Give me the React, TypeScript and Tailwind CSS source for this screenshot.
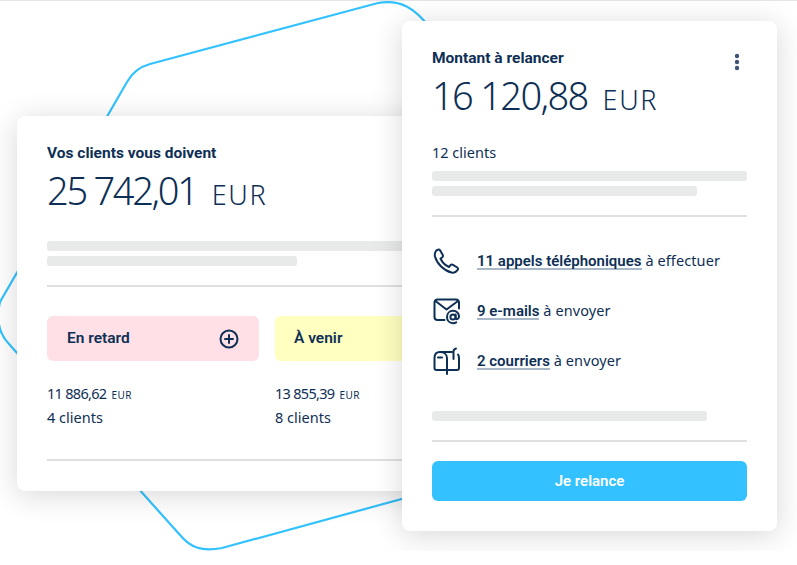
const font = { fontFamily: '"Noto Sans", sans-serif' };
const bold = { fontFamily: 'Roboto, "Noto Sans", sans-serif' };

function Skeleton({ w }: { w: string }) {
  return <div className={`h-[10px] rounded-[3px] bg-[#e8eaea] ${w}`} />;
}

function Phone() {
  return (
    <svg width="28" height="28" viewBox="0 0 28 28" fill="none" stroke="#0e2f55" strokeWidth="2" strokeLinecap="round" strokeLinejoin="round">
      <path d="M4 4C5 2.800 7 2 8 3.200L10.800 8C11.200 9 11 9.800 10 10.500L8.500 11.500C10 15 13.500 18.500 17 20L18.500 18.200C19.200 17.400 20 17.300 21 17.800L25.300 20.500C26.300 21.200 26.300 22.200 25.500 23.200C24 25.300 22 26.200 19.500 25.500C12 23.800 4.800 16.500 3 9.500C2.500 7.500 2.800 5.500 4 4Z" />
    </svg>
  );
}

function Mail() {
  return (
    <svg width="28" height="28" viewBox="0 0 28 28" fill="none" stroke="#0e2f55" strokeWidth="2" strokeLinecap="round" strokeLinejoin="round">
      <path d="M12.500 23H5.500C3.500 23 2.500 22 2.500 20V6C2.500 3.500 3.500 2.500 5.500 2.500H24C26 2.500 27 3.500 27 6V11.500" />
      <path d="M3.500 4L14.500 12.500 26 4" />
      <circle cx="21" cy="20" r="2.600" />
      <path d="M23.600 17.500V21C23.600 22.800 26.800 22.500 27 19.800C27.200 16.200 24.500 13.800 21 13.800C17.500 13.800 15 16.500 15 20C15 23.500 17.500 26.200 21 26.200C22.300 26.200 23.300 25.900 24.200 25.300" />
    </svg>
  );
}

function Mailbox() {
  return (
    <svg width="28" height="28" viewBox="0 0 28 28" fill="none" stroke="#0e2f55" strokeWidth="2" strokeLinecap="round" strokeLinejoin="round">
      <path d="M20 5H8C4.500 5 2.500 7.500 2.500 11V21C2.500 22.200 3.300 23 4.500 23H25C26 23 27 22.200 27 21V11C27 9.500 26.700 8.500 26 7.500" />
      <path d="M8 5C12 5 15 7.500 15 11V27" />
      <path d="M6 10.500H10" />
      <path d="M21.500 12V4.500C21.500 3 22.500 2 24 1.500" />
    </svg>
  );
}

function Action({ icon, strong, rest }: { icon: React.ReactNode; strong: string; rest: string }) {
  return (
    <div className="flex items-center h-[28px]">
      <div className="w-[45px] shrink-0 flex">{icon}</div>
      <span className="text-[14.500px] tracking-[0.1px] text-[#0e2f55]">
        <span style={bold} className="text-[15px] tracking-[0px] font-semibold border-b-2 border-[#a9b8c9] leading-[14px] inline-block">{strong}</span> {rest}
      </span>
    </div>
  );
}

function Amount({ value, tracking }: { value: string; tracking: string }) {
  return (
    <div className="flex items-baseline font-light text-[#0e2f55] mt-[3px] h-[48px] leading-[48px]">
      <span className={`text-[38px] ${tracking}`}>{value}</span>
      <span className="text-[27px] tracking-[1.700px] ml-[15px]">EUR</span>
    </div>
  );
}

export default function App() {
  return (
    <div style={font} className="relative w-[797px] h-[551px] overflow-hidden bg-white border-t border-[#e5e5e5]">
      <svg className="absolute left-0 top-[-1px]" width="797" height="565" fill="none" stroke="#33c2ff" strokeWidth="2.200">
        <path d="M430 28C415 8 400-1 378 3L150 64C139 67 132 73 127 82L0 302C-4 320-1 334 9 344L180 535C190 547 201 552 222 548L420 494" />
      </svg>

      <div className="absolute left-[17px] top-[115px] w-[430px] h-[375px] rounded-[8px] bg-white shadow-[0_4px_30px_rgba(0,0,0,0.16)] px-[30px] pt-[27px]">
        <div style={bold} className="text-[15.500px] font-bold text-[#0e2f55] leading-[20px]">Vos clients vous doivent</div>
        <Amount value="25 742,01" tracking="tracking-[-2.300px]" />
        <div className="flex flex-col gap-[5px] mt-[27px]">
          <Skeleton w="w-[370px]" />
          <Skeleton w="w-[250px]" />
        </div>
        <div className="h-[2px] bg-[#e0e0e0] mt-[19px] w-[370px]" />
        <div className="flex gap-[16px] mt-[29px]">
          <div className="w-[212px] shrink-0 h-[45px] rounded-[6px] bg-[#ffe0e6] flex items-center justify-between pl-[20px] pr-[20px]">
            <span style={bold} className="text-[15.500px] font-semibold text-[#0e2f55]">En retard</span>
            <svg width="20" height="20" viewBox="0 0 20 20" fill="none" stroke="#0e2f55" strokeWidth="2" strokeLinecap="round">
              <circle cx="10" cy="10" r="8.500" />
              <path d="M10 6v8M6 10h8" />
            </svg>
          </div>
          <div className="w-[212px] shrink-0 h-[45px] rounded-[6px] bg-[#ffffc0] flex items-center pl-[19px]">
            <span style={bold} className="text-[15.500px] font-semibold text-[#0e2f55]">À venir</span>
          </div>
        </div>
        <div className="flex gap-[16px] mt-[20px] text-[#0e2f55]">
          <div className="w-[212px] shrink-0">
            <div className="h-[24px] leading-[24px] text-[14.500px] tracking-[-0.700px]">11 886,62 <span className="text-[10px] tracking-[0.5px] ml-[2px]">EUR</span></div>
            <div className="h-[24px] leading-[24px] text-[14.500px]">4 clients</div>
          </div>
          <div className="w-[212px] shrink-0">
            <div className="h-[24px] leading-[24px] text-[14.500px] tracking-[-0.700px]">13 855,39 <span className="text-[10px] tracking-[0.5px] ml-[2px]">EUR</span></div>
            <div className="h-[24px] leading-[24px] text-[14.500px]">8 clients</div>
          </div>
        </div>
        <div className="h-[2px] bg-[#e0e0e0] mt-[30px] w-[370px]" />
      </div>

      <div className="absolute left-[402px] top-[20px] w-[375px] h-[510px] rounded-[8px] bg-white shadow-[0_4px_30px_rgba(0,0,0,0.16)] px-[30px] pt-[27px]">
        <div className="flex items-start justify-between h-[20px]">
          <div style={bold} className="text-[15.500px] font-bold text-[#0e2f55] leading-[20px]">Montant à relancer</div>
          <svg className="mt-[5px] mr-[7px]" width="6" height="18" viewBox="0 0 6 18" fill="#3b5573">
            <circle cx="3" cy="3" r="2.200" />
            <circle cx="3" cy="9" r="2.200" />
            <circle cx="3" cy="15" r="2.200" />
          </svg>
        </div>
        <Amount value="16 120,88" tracking="tracking-[-1.650px]" />
        <div className="text-[14.500px] leading-[20px] text-[#0e2f55] mt-[23px]">12 clients</div>
        <div className="flex flex-col gap-[5px] mt-[9px]">
          <Skeleton w="w-[315px]" />
          <Skeleton w="w-[265px]" />
        </div>
        <div className="h-[2px] bg-[#e0e0e0] mt-[19px]" />
        <div className="flex flex-col gap-[22px] mt-[30px]">
          <Action icon={<Phone />} strong="11 appels téléphoniques" rest="à effectuer" />
          <Action icon={<Mail />} strong="9 e-mails" rest="à envoyer" />
          <Action icon={<Mailbox />} strong="2 courriers" rest="à envoyer" />
        </div>
        <div className="mt-[36px]"><Skeleton w="w-[275px]" /></div>
        <div className="h-[2px] bg-[#e0e0e0] mt-[19px]" />
        <button style={bold} className="mt-[19px] w-full h-[40px] rounded-[6px] bg-[#33c2ff] text-white text-[15px] font-semibold">Je relance</button>
      </div>
    </div>
  );
}
